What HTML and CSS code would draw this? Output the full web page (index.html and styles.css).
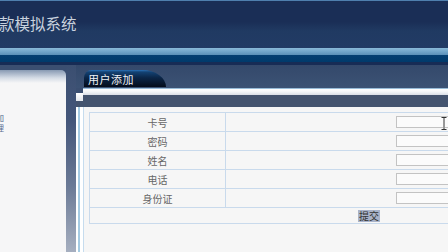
FILE: index.html
```html
<!DOCTYPE html>
<html lang="zh-CN">
<head>
    <meta charset="UTF-8">
    <meta name="viewport" content="width=device-width, initial-scale=1.0">
    <title>银行存取款模拟系统</title>
    <link rel="stylesheet" href="styles.css">
</head>
<body>
    <div class="page">
        <header class="top">
            <h1 class="title">银行存取款模拟系统</h1>
        </header>
        <div class="nav-bar"></div>

        <div class="body">
            <aside class="side">
                <ul class="menu">
                    <li>用户添加</li>
                    <li>用户管理</li>
                </ul>
            </aside>
            <div class="gap"></div>

            <main class="main">
                <div class="tabs"><span class="tab">用户添加</span></div>
                <div class="frame-top"></div>
                <div class="frame-band"><span class="notch"></span></div>

                <div class="panel">
                    <form>
                        <table class="form-table">
                            <tr>
                                <td class="label">卡号</td>
                                <td><input type="text" name="card"></td>
                            </tr>
                            <tr>
                                <td class="label">密码</td>
                                <td><input type="password" name="password"></td>
                            </tr>
                            <tr>
                                <td class="label">姓名</td>
                                <td><input type="text" name="name"></td>
                            </tr>
                            <tr>
                                <td class="label">电话</td>
                                <td><input type="text" name="phone"></td>
                            </tr>
                            <tr>
                                <td class="label">身份证</td>
                                <td><input type="text" name="idcard"></td>
                            </tr>
                            <tr>
                                <td class="submit-cell" colspan="2"><button type="button" class="submit">提交</button></td>
                            </tr>
                        </table>
                    </form>
                </div>
            </main>
        </div>

        <svg class="cursor" width="6" height="13" viewBox="0 0 6 13">
            <path d="M0.5 0.5h2.5M3 0.5h2.5M3 0.5v12M0.5 12.5h2.5M3 12.5h2.5" stroke="#fff" stroke-width="2" fill="none"/>
            <path d="M0.5 0.5h2.5M3 0.5h2.5M3 0.5v12M0.5 12.5h2.5M3 12.5h2.5" stroke="#333" stroke-width="1" fill="none"/>
        </svg>
    </div>
</body>
</html>
```

FILE: styles.css
```css
html, body {
    margin: 0;
    padding: 0;
    height: 252px;
    overflow: hidden;
    background: #3b4f71;
}
body {
    font-family: "Noto Sans CJK SC", "DejaVu Sans", sans-serif;
}
.page {
    position: relative;
    margin-left: -110px;
    width: 800px;
    height: 252px;
    display: flex;
    flex-direction: column;
}
.top {
    height: 47px;
    border-top: 1px solid #4f7fae;
    background: linear-gradient(#1a2e56 0, #1a2e56 44%, #203a62 64%, #223b65 100%);
}
.title {
    margin: 0;
    padding: 12px 0 0 47px;
    font-size: 15.5px;
    line-height: 20px;
    font-weight: normal;
    color: #c9d2de;
}
.nav-bar {
    height: 17px;
    background: linear-gradient(#8abad9 0, #6fa3c8 4px, #5a8fb8 7px, #053f72 7px, #003a6b 14px, #172c55 14px, #172c55 17px);
}
.body {
    flex: 1;
    display: flex;
    background: #3b4f71;
}
.side {
    width: 176px;
    margin-top: 5px;
    background: linear-gradient(#8799b2 0, #d5dce6 8px, #f6f6f7 13px);
    border-top-right-radius: 5px;
}
.menu {
    list-style: none;
    margin: 0;
    padding: 43px 62px 0 0;
    text-align: right;
    font-size: 8px;
    line-height: 10px;
    color: #5a6c90;
}
.gap {
    width: 10px;
    background: linear-gradient(#3b4f71 0, #44567a 30%, #6b7a96 65%, #a6afc0 100%);
}
.main {
    flex: 1;
    display: flex;
    flex-direction: column;
    background: #3b4f71;
}
.tabs {
    height: 23px;
    box-sizing: border-box;
    padding: 5px 0 0 8px;
    background: linear-gradient(#34496b, #3c5274);
}
.tab {
    display: block;
    width: 78px;
    height: 17px;
    padding-left: 4px;
    border-radius: 8px 24px 0 0 / 8px 17px 0 0;
    background: linear-gradient(#2a72b8 0, #134273 2px, #0b2648 45%, #040c1a 100%);
    color: #eef2f7;
    font-size: 11px;
    line-height: 19px;
    letter-spacing: 0.5px;
}
.frame-top {
    height: 7px;
    margin-left: 7px;
    background: linear-gradient(#98bcd8 0, #98bcd8 1px, #ffffff 1px, #f2f4f7 4px, #d9dee6 7px);
}
.frame-band {
    height: 12px;
    background: #44546f;
}
.notch {
    display: block;
    width: 7px;
    height: 8px;
    margin-top: -2px;
    background: linear-gradient(#ffffff, #e2e6ec);
}
.panel {
    flex: 1;
    padding: 5px 0 0 13px;
    background: #f6f6f6;
    box-shadow: inset 2px 0 #ffffff, inset 4px 0 #a5cbe3, inset 7px 0 #ffffff, inset 8px 0 #c6dcee;
}
.form-table {
    width: 560px;
    border-collapse: collapse;
    border: 1px solid #c9daec;
}
.form-table td {
    height: 18px;
    padding: 0;
    border-bottom: 1px solid #c9daec;
}
.label {
    width: 135px;
    text-align: center;
    font-size: 10px;
    color: #666;
    border-right: 1px solid #c9daec;
}
.form-table input {
    display: block;
    width: 130px;
    height: 12px;
    margin-left: 170px;
    box-sizing: border-box;
    border: 1px solid #c3c3c3;
    background: #fbfbfb;
    padding: 0;
}
.form-table .submit-cell {
    height: 15px;
    text-align: center;
    line-height: 12px;
    font-size: 10px;
}
.submit {
    display: inline-block;
    height: 12px;
    vertical-align: middle;
    border: none;
    padding: 0 1px;
    background: #a9b3c9;
    color: #333;
    font-family: inherit;
    font-size: 10px;
    line-height: 12px;
    cursor: pointer;
}
.cursor {
    position: absolute;
    left: 551px;
    top: 117px;
}
```
